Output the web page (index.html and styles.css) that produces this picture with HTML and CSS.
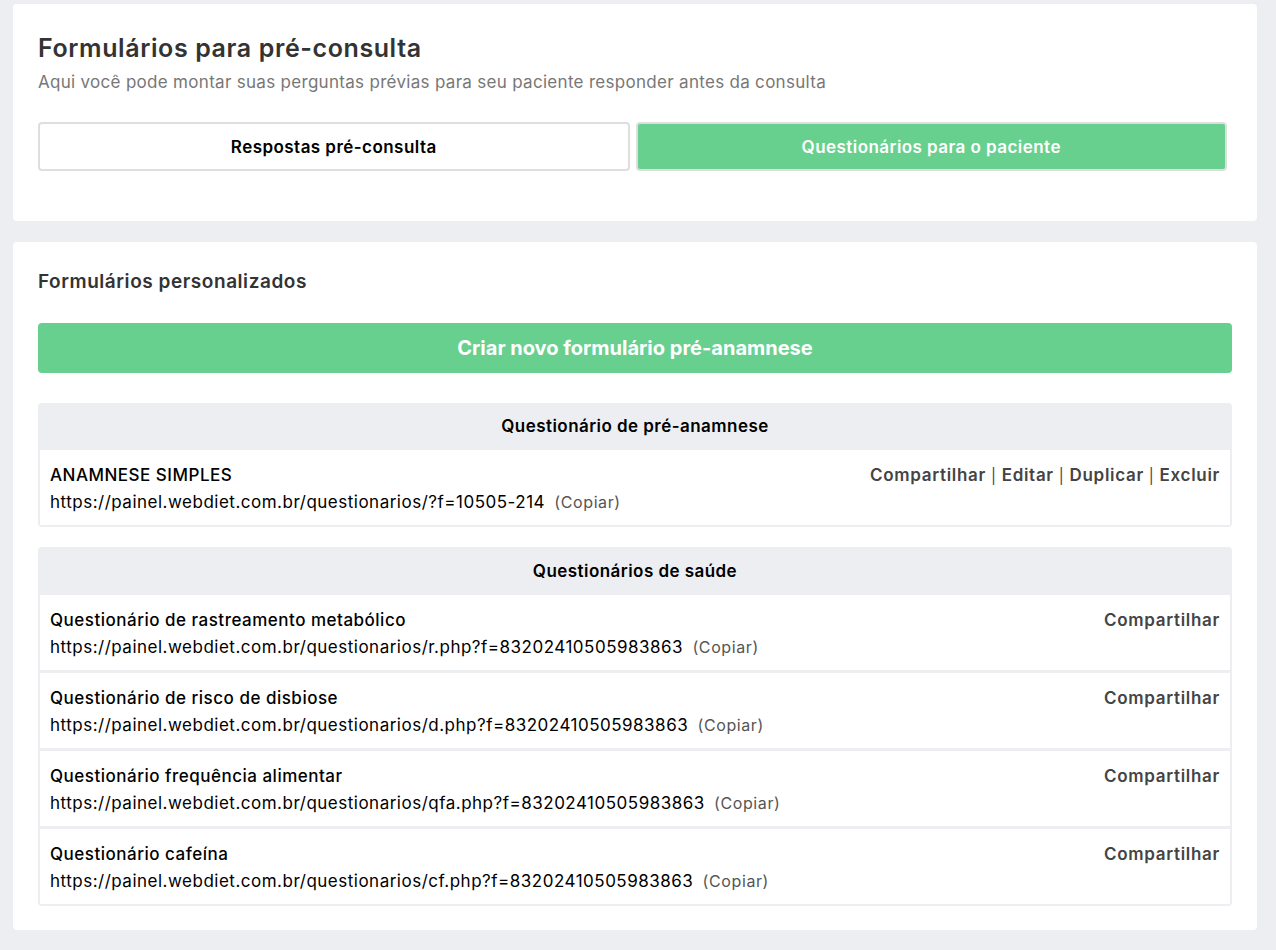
FILE: index.html
```html
<!DOCTYPE html>
<html lang="pt-BR">
<head>
<meta charset="utf-8">
<title>Formulários para pré-consulta</title>
<link rel="stylesheet" href="styles.css">
</head>
<body>
<div class="page">
  <section class="card card-top">
    <h1 class="title">Formulários para pré-consulta</h1>
    <p class="subtitle">Aqui você pode montar suas perguntas prévias para seu paciente responder antes da consulta</p>
    <div class="tabs">
      <button class="tab">Respostas pré-consulta</button>
      <button class="tab tab-active">Questionários para o paciente</button>
    </div>
  </section>

  <section class="card card-forms">
    <h2 class="section-title">Formulários personalizados</h2>
    <button class="btn-create">Criar novo formulário pré-anamnese</button>

    <div class="group">
      <div class="group-head">Questionário de pré-anamnese</div>
      <div class="row">
        <div class="row-main">
          <div class="row-name">ANAMNESE SIMPLES</div>
          <div class="row-url">https://painel.webdiet.com.br/questionarios/?f=10505-214 <span class="copy">(Copiar)</span></div>
        </div>
        <div class="row-actions">Compartilhar <span class="sep">|</span> Editar <span class="sep">|</span> Duplicar <span class="sep">|</span> Excluir</div>
      </div>
    </div>

    <div class="group">
      <div class="group-head group-head-tall">Questionários de saúde</div>
      <div class="row">
        <div class="row-main">
          <div class="row-name">Questionário de rastreamento metabólico</div>
          <div class="row-url">https://painel.webdiet.com.br/questionarios/r.php?f=83202410505983863 <span class="copy">(Copiar)</span></div>
        </div>
        <div class="row-actions">Compartilhar</div>
      </div>
      <div class="row">
        <div class="row-main">
          <div class="row-name">Questionário de risco de disbiose</div>
          <div class="row-url">https://painel.webdiet.com.br/questionarios/d.php?f=83202410505983863 <span class="copy">(Copiar)</span></div>
        </div>
        <div class="row-actions">Compartilhar</div>
      </div>
      <div class="row">
        <div class="row-main">
          <div class="row-name">Questionário frequência alimentar</div>
          <div class="row-url">https://painel.webdiet.com.br/questionarios/qfa.php?f=83202410505983863 <span class="copy">(Copiar)</span></div>
        </div>
        <div class="row-actions">Compartilhar</div>
      </div>
      <div class="row">
        <div class="row-main">
          <div class="row-name">Questionário cafeína</div>
          <div class="row-url">https://painel.webdiet.com.br/questionarios/cf.php?f=83202410505983863 <span class="copy">(Copiar)</span></div>
        </div>
        <div class="row-actions">Compartilhar</div>
      </div>
    </div>
  </section>
</div>
</body>
</html>
```

FILE: styles.css
```css
* { box-sizing: border-box; }
html, body { margin: 0; padding: 0; }
body {
  background: #edeef2;
  font-family: Inter, "Noto Sans", sans-serif;
  color: #000;
}
.page {
  padding: 4px 19px 20px 13px;
  display: flex;
  flex-direction: column;
  gap: 21px;
}
.card {
  background: #fff;
  border-radius: 4px;
  padding: 0 25px;
}
.card-top {
  height: 217px;
  padding-top: 29px;
}
.title {
  margin: 0;
  font-size: 25px;
  letter-spacing: 0.6px;
  font-weight: 600;
  color: #333;
  line-height: 30px;
}
.subtitle {
  margin: 8px 0 0;
  font-size: 17px;
  letter-spacing: 0.3px;
  color: #777;
  line-height: 22px;
}
.tabs {
  display: flex;
  gap: 6px;
  margin-top: 29px;
  padding-right: 5px;
}
.tab {
  flex: 1;
  height: 49px;
  border: 2px solid #dedede;
  border-radius: 4px;
  background: #fff;
  font-family: inherit;
  font-size: 17px;
  letter-spacing: 0.45px;
  font-weight: 600;
  color: #000;
}
.tab-active {
  background: #68d08e;
  color: #fff;
}
.card-forms {
  padding-top: 28px;
  padding-bottom: 24px;
}
.section-title {
  margin: 0;
  font-size: 19px;
  letter-spacing: 0.55px;
  font-weight: 600;
  color: #333;
  line-height: 24px;
}
.btn-create {
  display: block;
  width: 100%;
  height: 50px;
  margin-top: 29px;
  border: 0;
  border-radius: 4px;
  background: #68d08e;
  color: #fff;
  font-family: inherit;
  font-size: 20px;
  font-weight: 700;
}
.group {
  margin-top: 30px;
  background: #edeef2;
  border-radius: 4px;
  padding: 0 2px 2px;
  display: flex;
  flex-direction: column;
  gap: 3px;
}
.group + .group { margin-top: 20px; }
.group-head {
  height: 46px;
  display: flex;
  align-items: center;
  justify-content: center;
  font-size: 17px;
  letter-spacing: 0.45px;
  font-weight: 600;
  color: #000;
  margin-bottom: -2px;
}
.group-head-tall { height: 47px; }
.row {
  background: #fff;
  display: flex;
  justify-content: space-between;
  padding: 14px 10px 11px;
  min-height: 75px;
}
.row-name {
  font-size: 17px;
  letter-spacing: 0.5px;
  line-height: 22px;
  font-weight: 500;
}
.row-url {
  font-size: 17px;
  letter-spacing: 0.5px;
  line-height: 22px;
  margin-top: 5px;
}
.copy {
  font-size: 16px;
  letter-spacing: 0.6px;
  color: #555;
  margin-left: 4px;
}
.row-actions {
  font-size: 17px;
  letter-spacing: 0.7px;
  font-weight: 600;
  color: #444;
  line-height: 22px;
}
.sep {
  font-weight: 400;
  font-size: 15px;
}
```
